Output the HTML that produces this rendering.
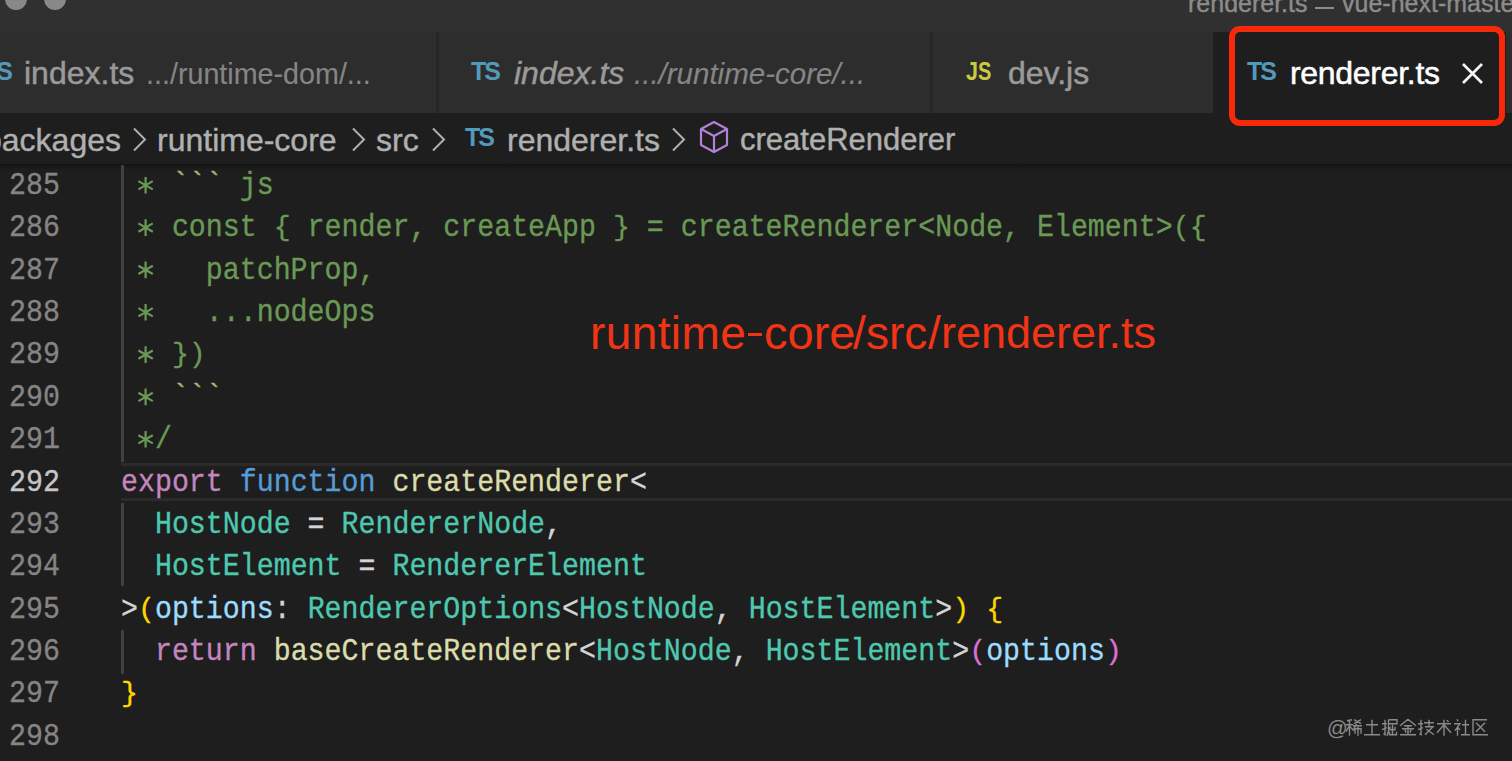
<!DOCTYPE html>
<html><head><meta charset="utf-8">
<style>
html,body{margin:0;padding:0;}
body{width:1512px;height:761px;overflow:hidden;background:#1e1e1e;position:relative;font-family:"Liberation Sans",sans-serif;}
.abs{position:absolute;}
#title{left:0;top:0;width:1512px;height:32px;background:#303030;}
.dot{position:absolute;width:22px;height:22px;border-radius:50%;background:#898989;top:-12px;}
.titletext{position:absolute;left:1188px;top:-12px;font-size:25px;color:#8c8c8c;white-space:nowrap;line-height:30px;-webkit-text-stroke:0.4px currentColor;}
#tabs{left:0;top:32px;width:1512px;height:81px;background:#2d2d2d;}
.sep{position:absolute;top:0;width:3px;height:81px;background:#262626;}
.tab{position:absolute;top:0;height:81px;}
.tabtxt{position:absolute;top:23.1px;font-size:32px;line-height:36px;color:#9a9a9a;white-space:nowrap;-webkit-text-stroke:0.5px currentColor;}
.desc{color:#858585;font-size:29.5px;-webkit-text-stroke:0.15px currentColor;}
.ts{position:absolute;font-weight:bold;font-size:25px;color:#519aba;line-height:25px;letter-spacing:-2px;}
.js{position:absolute;font-weight:bold;font-size:25px;color:#cbcb41;line-height:25px;letter-spacing:-3px;}
#active{left:1213px;top:32px;width:293px;height:81px;background:#1e1e1e;}
#crumbs{left:0;top:113px;width:1512px;height:51px;background:#1e1e1e;}
.crumb{position:absolute;top:8.7px;font-size:32px;line-height:36px;color:#b0b0b0;white-space:nowrap;-webkit-text-stroke:0.4px currentColor;}
.chev{position:absolute;top:127px;}
#shadow{left:0;top:164px;width:1512px;height:6px;background:linear-gradient(#141414,rgba(30,30,30,0));}
.ln{position:absolute;left:0;width:60px;text-align:right;font-family:"Liberation Mono",monospace;font-size:28.27px;line-height:42.35px;color:#858585;transform:scaleY(1.12);-webkit-text-stroke:0.3px currentColor;transform-origin:0 28.72px;}
.act{color:#c6c6c6}
.code{position:absolute;left:121px;font-family:"Liberation Mono",monospace;font-size:28.27px;line-height:42.35px;white-space:pre;color:#d4d4d4;transform:scaleY(1.12);transform-origin:0 28.72px;-webkit-text-stroke:0.3px currentColor;}
.c{color:#6a9955}.bt{color:#a3b46a}.k{color:#c586c0}.f{color:#569cd6}.y{color:#dcdcaa}.t{color:#4ec9b0}.v{color:#9cdcfe}.b1{color:#ffd700}.b2{color:#da70d6}
.p{display:inline-block;transform:scaleY(0.9);transform-origin:50% 19px;}
.guide{position:absolute;left:121px;width:2.5px;background:#404040;}
#curline{left:121px;top:462.5px;width:1391px;height:32.5px;border-top:3px solid #2b2b2b;border-bottom:3px solid #2b2b2b;}
#redtext{left:590px;top:307px;width:600px;height:52px;font-size:46px;line-height:52px;color:#f23416;white-space:nowrap;}
.rs{position:absolute;top:0;}
#redbox{left:1229px;top:26px;width:264px;height:88px;border:6px solid #f8290b;border-radius:11px;}
</style></head>
<body>
<div id="title" class="abs">
  <div class="dot" style="left:5px"></div>
  <div class="dot" style="left:44px"></div>
  <div class="titletext">renderer.ts</div><div class="abs" style="left:1315px;top:7px;width:19px;height:2px;background:#8c8c8c"></div><div class="titletext" style="left:1342px">vue-next-master</div>
</div>
<div id="tabs" class="abs">
  <div class="sep" style="left:436px"></div>
  <div class="sep" style="left:930px"></div>
  <div class="ts" style="left:-17px;top:26.8px">TS</div>
  <div class="tabtxt" style="left:24px">index.ts</div><div class="tabtxt desc" style="left:146px;top:23.8px;font-size:28.7px">.../runtime-dom/...</div>
  <div class="ts" style="left:471px;top:26.8px">TS</div>
  <div class="tabtxt" style="left:514px;font-style:italic">index.ts</div><div class="tabtxt desc" style="left:634px;top:23.8px;font-style:italic">.../runtime-core/...</div>
  <div class="js" style="left:966px;top:26.8px;transform:scaleX(.86);transform-origin:0 0">J</div><div class="js" style="left:978px;top:26.8px;transform:scaleX(.8);transform-origin:0 0">S</div>
  <div class="tabtxt" style="left:1008px">dev.js</div>
</div>
<div id="active" class="abs">
  <div class="ts" style="left:34px;top:26.8px">TS</div>
  <div class="tabtxt" style="left:77px;color:#ffffff;letter-spacing:-0.3px">renderer.ts</div>
  <svg class="abs" style="left:249px;top:31px" width="21" height="21" viewBox="0 0 21 21"><path d="M1 1L20 20M20 1L1 20" stroke="#f4f4f4" stroke-width="2.7"/></svg>
</div>
<div id="crumbs" class="abs">
  <div class="crumb" style="left:-16px">packages</div>
  <div class="crumb" style="left:157px">runtime-core</div>
  <div class="crumb" style="left:376px">src</div>
  <div class="ts" style="left:465px;top:12px">TS</div>
  <div class="crumb" style="left:507px">renderer.ts</div>
  <div class="crumb" style="left:740px;font-size:31px">createRenderer</div>
  <svg class="abs" style="left:0;top:0" width="1512" height="51">
    <g fill="none" stroke="#b0b0b0" stroke-width="2">
      <path d="M134 15.5L145 26.5L134 37.5"/>
      <path d="M353 15.5L364 26.5L353 37.5"/>
      <path d="M433 15.5L444 26.5L433 37.5"/>
      <path d="M673 15.5L684 26.5L673 37.5"/>
    </g>
    <g fill="none" stroke="#b180d7" stroke-width="2.2" stroke-linejoin="round">
      <path d="M714 9L727 16L727 32L714 39L701 32L701 16Z"/>
      <path d="M701 16L714 23L727 16M714 23L714 39"/>
    </g>
  </svg>
</div>
<div id="shadow" class="abs"></div>
<div id="curline" class="abs"></div>
<div class="guide" style="top:165px;height:297px"></div>
<div class="guide" style="top:503px;height:83px"></div>
<div class="guide" style="top:630px;height:44px"></div>
<div id="code">
<div class="ln" style="top:165.08px">285</div>
<div class="code" style="top:165.08px"><span class="c">   <span class="bt">```</span> js</span></div>
<div class="ln" style="top:207.43px">286</div>
<div class="code" style="top:207.43px"><span class="c">   const <span class="p">{</span> render, createApp <span class="p">}</span> = createRenderer&lt;Node, Element&gt;<span class="p">(</span><span class="p">{</span></span></div>
<div class="ln" style="top:249.78px">287</div>
<div class="code" style="top:249.78px"><span class="c">     patchProp,</span></div>
<div class="ln" style="top:292.13px">288</div>
<div class="code" style="top:292.13px"><span class="c">     ...nodeOps</span></div>
<div class="ln" style="top:334.48px">289</div>
<div class="code" style="top:334.48px"><span class="c">   <span class="p">}</span><span class="p">)</span></span></div>
<div class="ln" style="top:376.83px">290</div>
<div class="code" style="top:376.83px"><span class="c">   <span class="bt">```</span></span></div>
<div class="ln" style="top:419.18px">291</div>
<div class="code" style="top:419.18px"><span class="c">  /</span></div>
<div class="ln act" style="top:461.53px">292</div>
<div class="code" style="top:461.53px"><span class="k">export</span> <span class="f">function</span> <span class="y">createRenderer</span>&lt;</div>
<div class="ln" style="top:503.88px">293</div>
<div class="code" style="top:503.88px">  <span class="t">HostNode</span> = <span class="t">RendererNode</span>,</div>
<div class="ln" style="top:546.23px">294</div>
<div class="code" style="top:546.23px">  <span class="t">HostElement</span> = <span class="t">RendererElement</span></div>
<div class="ln" style="top:588.58px">295</div>
<div class="code" style="top:588.58px">&gt;<span class="b1"><span class="p">(</span></span><span class="v">options</span>: <span class="t">RendererOptions</span>&lt;<span class="t">HostNode</span>, <span class="t">HostElement</span>&gt;<span class="b1"><span class="p">)</span></span> <span class="b1"><span class="p">{</span></span></div>
<div class="ln" style="top:630.93px">296</div>
<div class="code" style="top:630.93px">  <span class="k">return</span> <span class="y">baseCreateRenderer</span>&lt;<span class="t">HostNode</span>, <span class="t">HostElement</span>&gt;<span class="b2"><span class="p">(</span></span><span class="v">options</span><span class="b2"><span class="p">)</span></span></div>
<div class="ln" style="top:673.28px">297</div>
<div class="code" style="top:673.28px"><span class="b1"><span class="p">}</span></span></div>
<div class="ln" style="top:715.63px">298</div>
<div class="code" style="top:715.63px"></div>
<svg class="abs" style="left:0;top:0" width="1512" height="761"><g stroke="#6a9955" stroke-width="2.2" fill="none"><path d="M145.6 176.9V193.5M138.4 181.1L152.8 189.4M138.4 189.4L152.8 181.1"/><path d="M145.6 219.2V235.9M138.4 223.4L152.8 231.7M138.4 231.7L152.8 223.4"/><path d="M145.6 261.6V278.2M138.4 265.8L152.8 274.0M138.4 274.0L152.8 265.8"/><path d="M145.6 303.9V320.6M138.4 308.1L152.8 316.4M138.4 316.4L152.8 308.1"/><path d="M145.6 346.3V362.9M138.4 350.5L152.8 358.8M138.4 358.8L152.8 350.5"/><path d="M145.6 388.6V405.2M138.4 392.8L152.8 401.1M138.4 401.1L152.8 392.8"/><path d="M145.6 431.0V447.6M138.4 435.2L152.8 443.4M138.4 443.4L152.8 435.2"/></g></svg>
</div>
<div id="redtext" class="abs"><span class="rs" style="left:0px;letter-spacing:0.4px">runtime</span><span class="rs" style="left:174px;font-size:47px">core</span><span class="rs" style="left:263px">/</span><span class="rs" style="left:276px">src</span><span class="rs" style="left:338px">/</span><span class="rs" style="left:351px;font-size:45px">renderer.ts</span></div>
<div class="abs" style="left:748px;top:333px;width:14px;height:3.2px;background:#f23416"></div>
<div id="redbox" class="abs"></div>
<svg class="abs" style="left:0;top:0" width="1512" height="761"><text x="1327" y="734.5" font-family="Liberation Sans" font-size="20.5" fill="#8a8a8a">@</text><g fill="none" stroke="#8a8a8a" stroke-width="1.4"><path transform="translate(1346 718.7)" d="M1 2L6 1M0 6H7M3.5 2V17M3.5 7L0 13M4 8L7 11M8 1L15 5M15 1L8 5M7 7H16M10.5 5L7 12M9 15V10H15V15M12 8V17"/><path transform="translate(1364 718.7)" d="M2 6H14M8 1V16M0 16H16"/><path transform="translate(1382 718.7)" d="M0 5H5M3 1V16L1.5 15M0 11L5 9M6.5 1H15V5H6.5M6.5 1V12L5 17M10.5 6V16M8 8V11H13V8M7.5 13V16H14.5V13"/><path transform="translate(1400 718.7)" d="M8 0.5L0 7M8 0.5L16 7M4 7H12M2 10H14M8 7V16M5 11L6 14M11 11L10 14M0 16H16"/><path transform="translate(1418 718.7)" d="M0 5H5M3 1V16L1.5 15M0 11L5 9M6 4H16M11 1V8M7 8H15L7 16M8.5 10.5L16 16"/><path transform="translate(1436 718.7)" d="M1 5H15M8 1V17M8 6L1 14M8 6L15 14M11 1.5L12.5 3.5"/><path transform="translate(1454 718.7)" d="M3 0.5L4 2.5M0 5H6L1 12M3.5 8V17M4 9L6 11M8 6H15M11.5 1V16M7 16H16"/><path transform="translate(1472 718.7)" d="M15 1H1V16H16M4 4L13 13M13 4L4 13"/></g></svg>
</body></html>
